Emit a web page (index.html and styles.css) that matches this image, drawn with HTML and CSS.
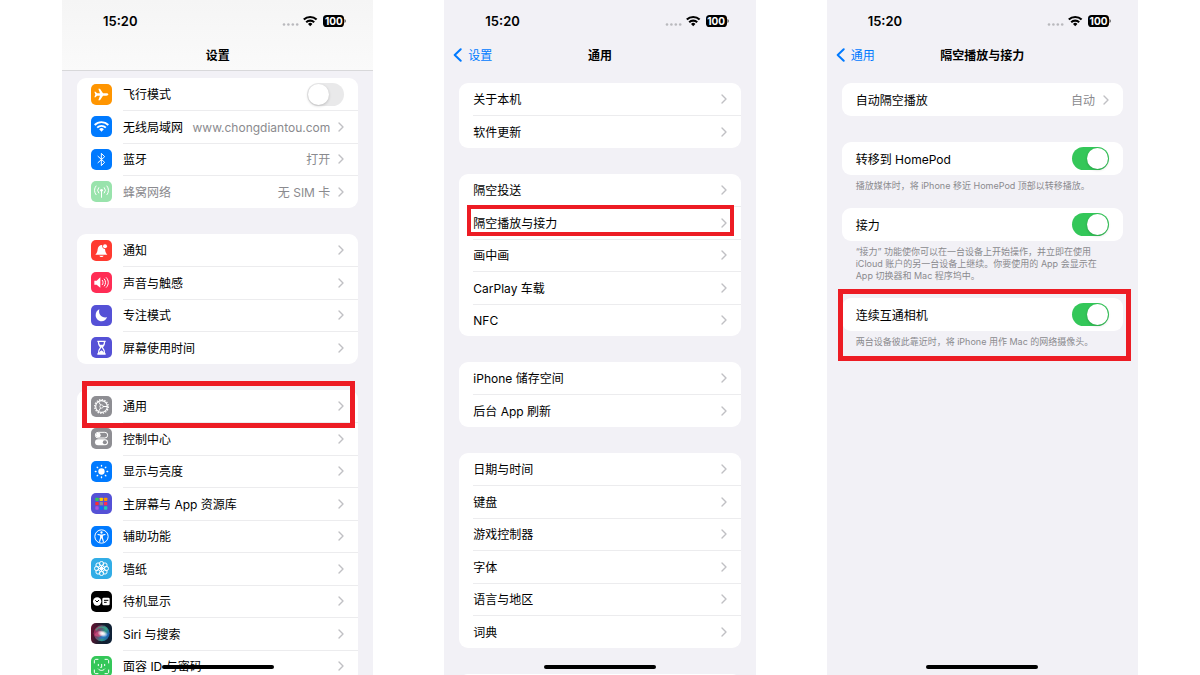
FILE: index.html
```
<!DOCTYPE html>
<html lang="zh-CN">
<head>
  <meta charset="UTF-8">
  <title>设置</title>
  <link rel="stylesheet" href="styles.css">
</head>
<body>

<!-- Shared shapes -->
<svg class="defs" aria-hidden="true">
  <symbol id="status" viewBox="0 0 64 14">
    <g fill="#b9b9bd">
      <circle cx="2" cy="10.500" r="1.3"/><circle cx="6.400" cy="10.500" r="1.3"/>
      <circle cx="10.800" cy="10.500" r="1.3"/><circle cx="15.200" cy="10.500" r="1.3"/>
    </g>
    <g fill="none" stroke="#000" stroke-width="2.100">
      <path d="M21.800 5.600a9 9 0 0 1 12.800 0"/>
      <path d="M24.200 8.300a5.700 5.700 0 0 1 8 0"/>
    </g>
    <path d="M28.200 12.200l-2.200-2.300a3.200 3.200 0 0 1 4.400 0z"/>
    <rect x="41" y="1" width="21" height="12" rx="3.600"/>
    <path d="M62.600 5v4c1.300-.5 1.300-3.500 0-4z"/>
  </symbol>
  <symbol id="chevron" viewBox="0 0 6 10">
    <path d="M1 1l4 4-4 4" fill="none" stroke="#c0c0c4" stroke-width="1.4" stroke-linecap="round" stroke-linejoin="round"/>
  </symbol>
  <symbol id="back" viewBox="0 0 9 14">
    <path d="M7.700 1.200L1.700 7l6 5.800" fill="none" stroke="#007aff" stroke-width="2" stroke-linecap="round" stroke-linejoin="round"/>
  </symbol>
</svg>

<main class="phones">

  <section class="phone">
    <header class="top top-scrolled">
      <div class="status">
        <span class="time">15:20</span>
        <span class="status-icons"><svg><use href="#status"/></svg><span class="battery">100</span></span>
      </div>
      <div class="nav"><h1>设置</h1></div>
    </header>

    <div class="content content-scrolled">
      <ul class="group with-icons">
        <li class="row">
          <svg class="icon orange" viewBox="0 0 63 63"><path fill="#fff" d="M52 31.500c0 2-3 3.500-6 3.500H36l-9 14h-5l5-14h-9l-4 5h-4l3-8.500L10 23h4l4 5h9l-5-14h5l9 14h10c3 0 6 1.500 6 3.500z"/></svg>
          <label for="airplane">飞行模式</label>
          <input type="checkbox" class="switch" id="airplane">
        </li>
        <li class="row">
          <svg class="icon blue" viewBox="0 0 63 63"><g fill="none" stroke="#fff" stroke-width="5.500"><path d="M11 27a29 29 0 0 1 41 0"/><path d="M18.500 35a18.500 18.500 0 0 1 26 0"/></g><path fill="#fff" d="M31.500 47l-7-7.500a10 10 0 0 1 14 0z"/></svg>
          <a href="#"><span>无线局域网</span><span class="value">www.chongdiantou.com</span><svg class="chevron"><use href="#chevron"/></svg></a>
        </li>
        <li class="row">
          <svg class="icon blue" viewBox="0 0 63 63"><path d="M21 22l20 18-10 10V13l10 10-20 18" fill="none" stroke="#fff" stroke-width="3" stroke-linejoin="round" stroke-linecap="round"/></svg>
          <a href="#"><span>蓝牙</span><span class="value">打开</span><svg class="chevron"><use href="#chevron"/></svg></a>
        </li>
        <li class="row disabled">
          <svg class="icon mint" viewBox="0 0 63 63"><g fill="none" stroke="#fff" stroke-width="3" stroke-linecap="round"><path d="M31.500 28v21M23 20a12 12 0 0 0 0 16M40 20a12 12 0 0 1 0 16M15 15a20 20 0 0 0 0 26M48 15a20 20 0 0 1 0 26"/></g><circle cx="31.500" cy="28" r="4" fill="#fff"/></svg>
          <a href="#"><span>蜂窝网络</span><span class="value">无 SIM 卡</span><svg class="chevron"><use href="#chevron"/></svg></a>
        </li>
      </ul>

      <ul class="group with-icons">
        <li class="row">
          <svg class="icon red" viewBox="0 0 63 63"><path fill="#fff" d="M13 44c5-5 6-8 7-16 1-9 7-14 14-13-2 6 2 12 8 12 1 9 2 12 7 17zM25 47h13c-2 5-11 5-13 0z"/><circle cx="42" cy="19" r="6" fill="#fff"/></svg>
          <a href="#"><span>通知</span><svg class="chevron"><use href="#chevron"/></svg></a>
        </li>
        <li class="row">
          <svg class="icon pink" viewBox="0 0 63 63"><path fill="#fff" d="M10 26h7l11-10v31L17 38h-7z"/><g fill="none" stroke="#fff" stroke-width="3" stroke-linecap="round"><path d="M34 25c3 4 3 9 0 13M40 21c5 6 5 15 0 21M46 17c8 8 8 21 0 29"/></g></svg>
          <a href="#"><span>声音与触感</span><svg class="chevron"><use href="#chevron"/></svg></a>
        </li>
        <li class="row">
          <svg class="icon indigo" viewBox="0 0 63 63"><path fill="#fff" d="M25 13c-4 15 7 27 23 24-3 8-9 12-16 12-10 0-18-8-18-18 0-8 4-15 11-18z"/></svg>
          <a href="#"><span>专注模式</span><svg class="chevron"><use href="#chevron"/></svg></a>
        </li>
        <li class="row">
          <svg class="icon indigo" viewBox="0 0 63 63"><path fill="none" stroke="#fff" stroke-width="4" stroke-linejoin="round" d="M19 13h25M19 51h25M22 13c0 10 1 12 7 18-6 7-7 9-7 20M41 13c0 10-1 12-7 18 6 7 7 9 7 20"/><path fill="#fff" d="M25 23h13l-6.500 9zM23 51c1-7 5-8 8.500-11 3.500 3 7.500 4 8.500 11z"/></svg>
          <a href="#"><span>屏幕使用时间</span><svg class="chevron"><use href="#chevron"/></svg></a>
        </li>
      </ul>

      <ul class="group with-icons">
        <li class="row">
          <svg class="icon gray" viewBox="0 0 63 63"><g fill="none" stroke="#fff"><circle cx="31.500" cy="31.500" r="20.500" stroke-width="4" stroke-dasharray="4 4.050"/><circle cx="31.500" cy="31.500" r="17.500" stroke-width="3.500"/><circle cx="31.500" cy="31.500" r="5" stroke-width="2.500"/><path stroke-width="3" d="M36 31.500h12M29 27.500l-6-10M29 35.500l-6 10"/></g></svg>
          <a href="#"><span>通用</span><svg class="chevron"><use href="#chevron"/></svg></a>
          <div class="mark mark-general"></div>
        </li>
        <li class="row">
          <svg class="icon gray" viewBox="0 0 63 63"><rect x="13" y="13" width="37" height="17" rx="8.500" fill="none" stroke="#fff" stroke-width="3"/><circle cx="22" cy="21.500" r="7" fill="#fff"/><rect x="12" y="34" width="39" height="18" rx="9" fill="#fff"/><circle cx="41.500" cy="43" r="6" fill="#8e8e93"/></svg>
          <a href="#"><span>控制中心</span><svg class="chevron"><use href="#chevron"/></svg></a>
        </li>
        <li class="row">
          <svg class="icon blue" viewBox="0 0 63 63"><circle cx="31.500" cy="31.500" r="9.500" fill="#fff"/><path fill="none" stroke="#fff" stroke-width="4" stroke-linecap="round" d="M31.500 13v2M31.500 48v2M13 31.500h2M48 31.500h2M18.500 18.500l1.500 1.500M43 43l1.500 1.500M18.500 44.500L20 43M43 20l1.500-1.500"/></svg>
          <a href="#"><span>显示与亮度</span><svg class="chevron"><use href="#chevron"/></svg></a>
        </li>
        <li class="row">
          <svg class="icon indigo" viewBox="0 0 63 63"><rect x="13" y="14" width="10" height="10" rx="2" fill="#34c759"/><rect x="26" y="14" width="10" height="10" rx="2" fill="#ffcc00"/><rect x="39" y="14" width="10" height="10" rx="2" fill="#ff9500"/><rect x="13" y="27" width="10" height="10" rx="2" fill="#ff2d30"/><rect x="26" y="27" width="10" height="10" rx="2" fill="#8e8e93"/><rect x="39" y="27" width="10" height="10" rx="2" fill="#ff2d55"/><rect x="13" y="40" width="10" height="10" rx="2" fill="#af52de"/><rect x="26" y="40" width="10" height="10" rx="2" fill="#007aff"/><rect x="39" y="40" width="10" height="10" rx="2" fill="#20d0b0"/></svg>
          <a href="#"><span>主屏幕与 App 资源库</span><svg class="chevron"><use href="#chevron"/></svg></a>
        </li>
        <li class="row">
          <svg class="icon blue" viewBox="0 0 63 63"><circle cx="31.500" cy="31.500" r="20" fill="none" stroke="#fff" stroke-width="3"/><circle cx="31.500" cy="19.500" r="3.500" fill="#fff"/><path fill="none" stroke="#fff" stroke-width="3.500" stroke-linecap="round" stroke-linejoin="round" d="M21 25.500l8 2h5l8-2M29 28v8l-3 10M34 28v8l3 10M31.500 28v8"/></svg>
          <a href="#"><span>辅助功能</span><svg class="chevron"><use href="#chevron"/></svg></a>
        </li>
        <li class="row">
          <svg class="icon cyan" viewBox="0 0 63 63"><g fill="none" stroke="#fff" stroke-width="3"><circle cx="31.500" cy="17" r="6.500"/><circle cx="41.800" cy="21.200" r="6.500"/><circle cx="46" cy="31.500" r="6.500"/><circle cx="41.800" cy="41.800" r="6.500"/><circle cx="31.500" cy="46" r="6.500"/><circle cx="21.200" cy="41.800" r="6.500"/><circle cx="17" cy="31.500" r="6.500"/><circle cx="21.200" cy="21.200" r="6.500"/><path d="M31.500 22v19M22 31.500h19M25 25l13 13M38 25L25 38"/></g><circle cx="31.500" cy="31.500" r="5" fill="#fff"/></svg>
          <a href="#"><span>墙纸</span><svg class="chevron"><use href="#chevron"/></svg></a>
        </li>
        <li class="row">
          <svg class="icon black" viewBox="0 0 63 63"><circle cx="18.500" cy="31.500" r="12.500" fill="#fff"/><path d="M13 28l5 5 6-6" fill="none" stroke="#000" stroke-width="3"/><rect x="34" y="20" width="22" height="23" rx="4" fill="#fff"/><path d="M39 28h13M39 34h8" stroke="#000" stroke-width="3"/></svg>
          <a href="#"><span>待机显示</span><svg class="chevron"><use href="#chevron"/></svg></a>
        </li>
        <li class="row">
          <svg class="icon siri" viewBox="0 0 63 63">
            <defs>
              <linearGradient id="siri-orb" x1="0" y1="0.300" x2="1" y2="0.700"><stop offset="0" stop-color="#d01a5a"/><stop offset="0.400" stop-color="#6b6f8c"/><stop offset="0.650" stop-color="#35b5a0"/><stop offset="1" stop-color="#1f5fd0"/></linearGradient>
              <radialGradient id="siri-glow"><stop offset="0" stop-color="#fff"/><stop offset="0.400" stop-color="#fff" stop-opacity="0.800"/><stop offset="1" stop-color="#fff" stop-opacity="0"/></radialGradient>
            </defs>
            <circle cx="32" cy="31" r="24" fill="url(#siri-orb)" opacity="0.800"/>
            <path d="M14 22c8-12 26-13 35 0" fill="none" stroke="#3fae84" stroke-width="4" opacity="0.700"/>
            <path d="M10 36c8-14 22-16 30-4-8 10-20 12-30 4z" fill="#ef4a80" opacity="0.600"/>
            <path d="M24 46c10 5 24-1 28-14-10-2-20 4-28 14z" fill="#2a6be0" opacity="0.600"/>
            <ellipse cx="35" cy="32" rx="16" ry="10" fill="url(#siri-glow)" transform="rotate(15 35 32)"/>
          </svg>
          <a href="#"><span>Siri 与搜索</span><svg class="chevron"><use href="#chevron"/></svg></a>
        </li>
        <li class="row">
          <svg class="icon green" viewBox="0 0 63 63"><path fill="none" stroke="#fff" stroke-width="3" stroke-linecap="round" stroke-linejoin="round" d="M10 21v-6c0-3 2-5 5-5h6M42 10h6c3 0 5 2 5 5v6M53 42v6c0 3-2 5-5 5h-6M21 53h-6c-3 0-5-2-5-5v-6M22 25v4M41 25v4M32 25v9h-3M22 39c5 6 14 6 19 0"/></svg>
          <a href="#"><span>面容 ID 与密码</span><svg class="chevron"><use href="#chevron"/></svg></a>
        </li>
      </ul>
    </div>
    <div class="home-bar"></div>
  </section>

  <section class="phone">
    <header class="top">
      <div class="status">
        <span class="time">15:20</span>
        <span class="status-icons"><svg><use href="#status"/></svg><span class="battery">100</span></span>
      </div>
      <div class="nav">
        <a class="back" href="#"><svg><use href="#back"/></svg><span>设置</span></a>
        <h1>通用</h1>
      </div>
    </header>

    <div class="content">
      <ul class="group">
        <li class="row"><a href="#"><span>关于本机</span><svg class="chevron"><use href="#chevron"/></svg></a></li>
        <li class="row"><a href="#"><span>软件更新</span><svg class="chevron"><use href="#chevron"/></svg></a></li>
      </ul>
      <ul class="group">
        <li class="row"><a href="#"><span>隔空投送</span><svg class="chevron"><use href="#chevron"/></svg></a></li>
        <li class="row"><a href="#"><span>隔空播放与接力</span><svg class="chevron"><use href="#chevron"/></svg></a><div class="mark mark-airplay"></div></li>
        <li class="row"><a href="#"><span>画中画</span><svg class="chevron"><use href="#chevron"/></svg></a></li>
        <li class="row"><a href="#"><span>CarPlay 车载</span><svg class="chevron"><use href="#chevron"/></svg></a></li>
        <li class="row"><a href="#"><span>NFC</span><svg class="chevron"><use href="#chevron"/></svg></a></li>
      </ul>
      <ul class="group">
        <li class="row"><a href="#"><span>iPhone 储存空间</span><svg class="chevron"><use href="#chevron"/></svg></a></li>
        <li class="row"><a href="#"><span>后台 App 刷新</span><svg class="chevron"><use href="#chevron"/></svg></a></li>
      </ul>
      <ul class="group">
        <li class="row"><a href="#"><span>日期与时间</span><svg class="chevron"><use href="#chevron"/></svg></a></li>
        <li class="row"><a href="#"><span>键盘</span><svg class="chevron"><use href="#chevron"/></svg></a></li>
        <li class="row"><a href="#"><span>游戏控制器</span><svg class="chevron"><use href="#chevron"/></svg></a></li>
        <li class="row"><a href="#"><span>字体</span><svg class="chevron"><use href="#chevron"/></svg></a></li>
        <li class="row"><a href="#"><span>语言与地区</span><svg class="chevron"><use href="#chevron"/></svg></a></li>
        <li class="row"><a href="#"><span>词典</span><svg class="chevron"><use href="#chevron"/></svg></a></li>
      </ul>
      <ul class="group">
        <li class="row"></li>
      </ul>
    </div>
    <div class="home-bar"></div>
  </section>

  <section class="phone">
    <header class="top">
      <div class="status">
        <span class="time">15:20</span>
        <span class="status-icons"><svg><use href="#status"/></svg><span class="battery">100</span></span>
      </div>
      <div class="nav">
        <a class="back" href="#"><svg><use href="#back"/></svg><span>通用</span></a>
        <h1>隔空播放与接力</h1>
      </div>
    </header>

    <div class="content">
      <ul class="group">
        <li class="row"><a href="#"><span>自动隔空播放</span><span class="value">自动</span><svg class="chevron"><use href="#chevron"/></svg></a></li>
      </ul>
      <div class="setting">
        <div class="group row">
          <label for="homepod">转移到 HomePod</label>
          <input type="checkbox" class="switch" id="homepod" checked>
        </div>
        <p>播放媒体时，将 iPhone 移近 HomePod 顶部以转移播放。</p>
      </div>
      <div class="setting">
        <div class="group row">
          <label for="handoff">接力</label>
          <input type="checkbox" class="switch" id="handoff" checked>
        </div>
        <p>“接力” 功能使你可以在一台设备上开始操作，并立即在使用<br>iCloud 账户的另一台设备上继续。你要使用的 App 会显示在<br>App 切换器和 Mac 程序坞中。</p>
      </div>
      <div class="setting">
        <div class="group row">
          <label for="camera">连续互通相机</label>
          <input type="checkbox" class="switch" id="camera" checked>
        </div>
        <p>两台设备彼此靠近时，将 iPhone 用作 Mac 的网络摄像头。</p>
        <div class="mark mark-camera"></div>
      </div>
    </div>
    <div class="home-bar"></div>
  </section>

</main>

</body>
</html>
```
FILE: styles.css
```
* {
  box-sizing: border-box;
}
body {
  margin: 0;
  background: #fff;
  color: #000;
  font-family: Inter, "Noto Sans CJK SC", sans-serif;
  font-size: 12px;
  line-height: 16px;
}
h1, p, ul {
  margin: 0;
  padding: 0;
}
a {
  color: inherit;
  text-decoration: none;
}
.defs {
  display: none;
}
.phones {
  display: grid;
  grid-template-columns: repeat(3, 1fr);
  gap: 71px;
  height: 100vh;
  padding: 0 62px;
}
.phone {
  position: relative;
  overflow: hidden;
  background: #f2f1f6;
}

/* status bar and title */
.top {
  padding-bottom: 2px;
  border-bottom: 1px solid transparent;
}
.top-scrolled {
  background: linear-gradient(#f5f5f5, #fafafa);
  border-bottom-color: #d8d8da;
}
.status {
  display: flex;
  align-items: center;
  justify-content: space-between;
  height: 42px;
  padding: 0 27px 0 41px;
}
.time {
  font-size: 13px;
  font-weight: 600;
}
.status-icons {
  position: relative;
  height: 14px;
}
.status-icons svg {
  display: block;
  width: 64px;
  height: 14px;
}
.battery {
  position: absolute;
  top: 0;
  right: 2px;
  width: 21px;
  color: #fff;
  font-size: 10px;
  font-weight: 700;
  line-height: 14px;
  text-align: center;
}
.nav {
  display: grid;
  grid-template-columns: 1fr auto 1fr;
  align-items: center;
  height: 26px;
  padding: 0 9px;
}
.nav h1 {
  grid-column: 2;
  font-size: 12px;
  font-weight: 600;
}
.back {
  display: flex;
  align-items: center;
  gap: 6px;
  color: #007aff;
}
.back svg {
  width: 9px;
  height: 14px;
}
/* glyphs ride high in their line box, so push them down to the middle */
.nav h1, .nav span, .row span, .row label {
  padding-top: 2px;
}

/* grouped lists */
.content {
  padding: 12px 15px 0;
}
.content-scrolled {
  padding-top: 7px;
}
.group {
  margin-bottom: 26px;
  border-radius: 9px;
  background: #fff;
  list-style: none;
}
.row {
  position: relative;
  display: flex;
  align-items: center;
  gap: 11px;
  min-height: 32px;
  padding: 0 14px;
}
.row:nth-child(even), .row:only-child, .setting .row {
  min-height: 33px;
}
.row + .row::before {
  content: "";
  position: absolute;
  top: 0;
  left: 14px;
  right: 0;
  height: 1px;
  background: #ececee;
}
.with-icons .row + .row::before {
  left: 46px;
}
.row a {
  flex: 1;
  display: flex;
  align-items: center;
  gap: 8px;
}
.row label {
  flex: 1;
}
.value, .disabled {
  color: #8a8a8e;
}
.value, .chevron {
  margin-left: auto;
}
.value + .chevron {
  margin-left: 0;
}
.chevron {
  width: 6px;
  height: 10px;
}

.icon {
  width: 21px;
  height: 21px;
  border-radius: 5px;
}
.orange { background: #ff9500; }
.blue { background: #007aff; }
.mint { background: #99e3ac; }
.red { background: #ff3b30; }
.pink { background: #ff2d55; }
.indigo { background: #5551d6; }
.gray { background: #8e8e93; }
.cyan { background: #32ade6; }
.black { background: #000; }
.siri { background: linear-gradient(100deg, #6a1030, #15202e 50%, #0d2036); }
.green { background: #34c759; }

.switch {
  appearance: none;
  display: flex;
  align-items: center;
  width: 37px;
  height: 23px;
  margin: 0;
  padding: 1px;
  border-radius: 12px;
  background: #e9e9ea;
}
.switch::before {
  content: "";
  width: 21px;
  height: 21px;
  border-radius: 50%;
  background: #fff;
  box-shadow: 0 1px 3px rgba(0, 0, 0, 0.2);
}
.switch:checked {
  justify-content: flex-end;
  background: #34c759;
}

.setting {
  position: relative;
  margin-bottom: 16px;
}
.setting .group {
  margin-bottom: 5px;
}
.setting p {
  padding-left: 14px;
  color: #8a8a8e;
  font-size: 9px;
  line-height: 12px;
  white-space: nowrap;
}

/* red frames over the steps to tap */
.mark {
  position: absolute;
  z-index: 1;
  border: 5px solid #ed1c24;
  pointer-events: none;
}
.mark-general {
  inset: -9px 3px -6px 5px;
}
.mark-airplay {
  inset: -1px 7px 3px 8px;
  border-width: 4px;
}
.mark-camera {
  inset: -9px -8px -13px -4px;
}

.home-bar {
  position: absolute;
  bottom: 6px;
  left: 32%;
  right: 32%;
  height: 4px;
  border-radius: 2px;
  background: #000;
}
```
